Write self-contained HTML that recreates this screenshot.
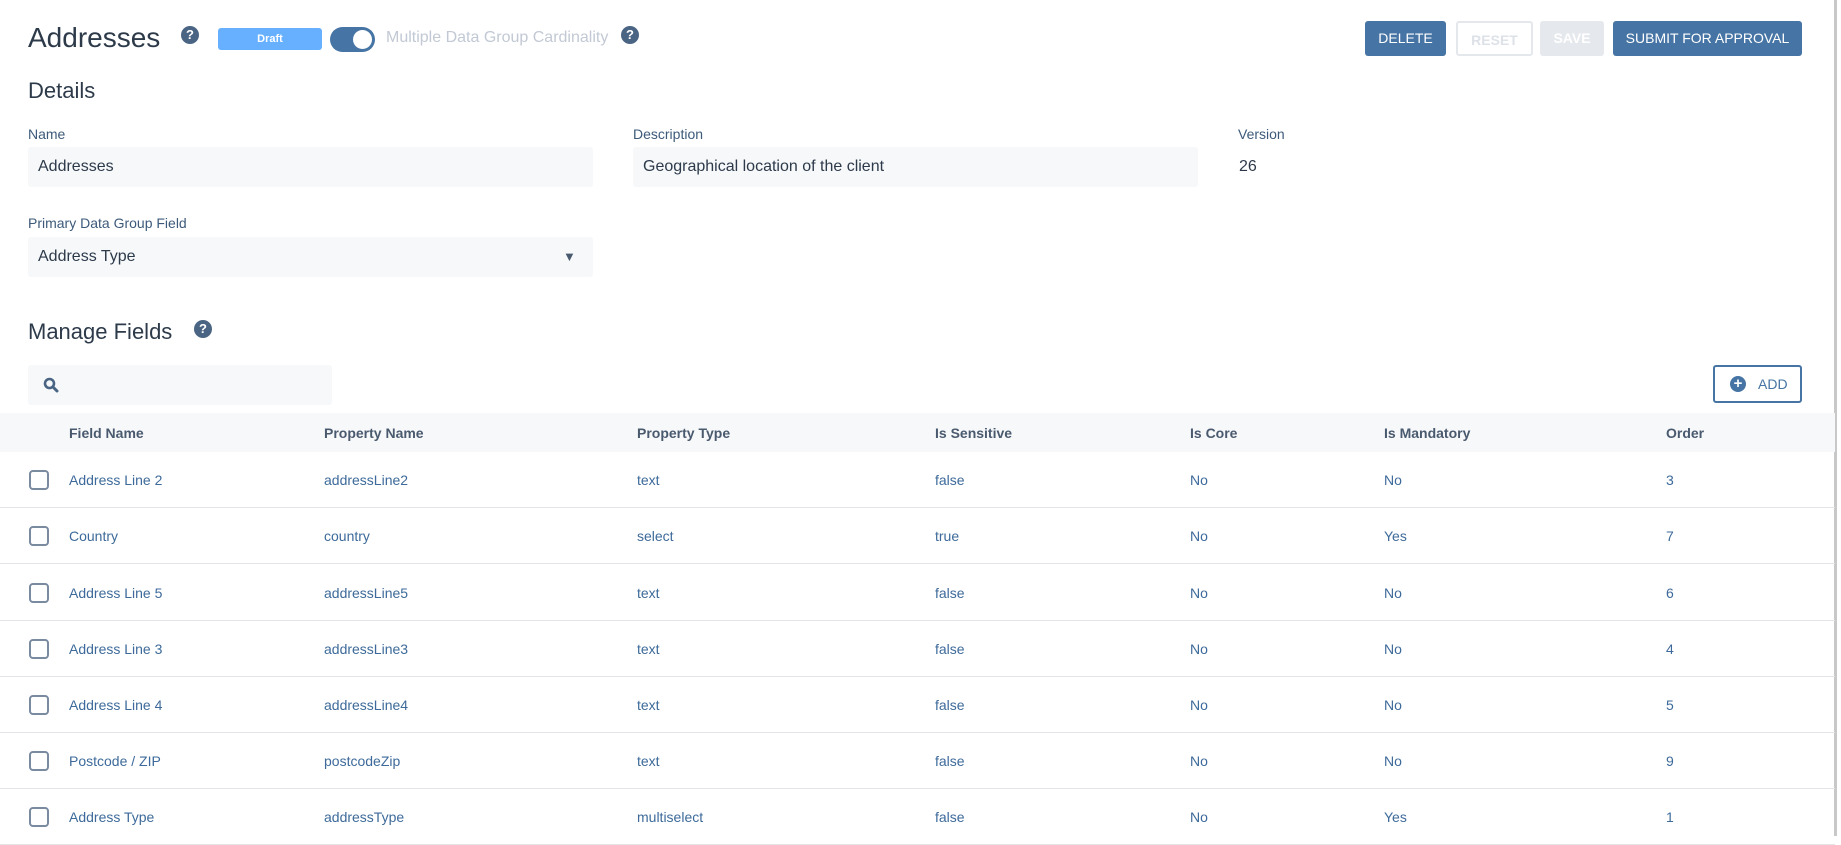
<!DOCTYPE html>
<html><head><meta charset="utf-8"><style>
*{box-sizing:border-box;margin:0;padding:0}
body{width:1841px;height:836px;overflow:hidden;background:#fff;font-family:"Liberation Sans",sans-serif;position:relative;color:#2d3a4a}
.a{position:absolute;white-space:nowrap}
.q{position:absolute;width:18px;height:18px;border-radius:50%;background:#4a6584;color:#fff;font-size:13px;font-weight:bold;text-align:center;line-height:18px}
.btn{position:absolute;top:21px;height:35px;border-radius:3px;font-size:14px;text-align:center;line-height:35px}
.lbl{font-size:14px;color:#3d5a7a}
.inp{position:absolute;background:#f6f8fa;border-radius:3px;font-size:16px;color:#2d3a4a;padding-left:10px;line-height:40px}
.hdr{position:absolute;left:0;top:413px;width:1835px;height:39px;background:#f7f8fa}
.th{position:absolute;top:425px;font-size:14px;font-weight:bold;color:#4a5a6e}
.row{position:absolute;left:0;width:1835px;height:56px;border-bottom:1px solid #e2e4e8}
.row span{position:absolute;top:20px;font-size:14px;color:#3d6a9a}
.cb{position:absolute;left:29px;top:18px;width:20px;height:20px;border:2px solid #7a8ba0;border-radius:4px}
</style></head><body>
<div class="a" style="left:28px;top:22px;font-size:28px;color:#2d3a4a">Addresses</div>
<div class="q" style="left:181px;top:26px">?</div>
<div class="a" style="left:218px;top:28px;width:104px;height:22px;background:#66b0ff;border-radius:3px;color:#fff;font-size:11px;font-weight:bold;text-align:center;line-height:22px">Draft</div>
<div class="a" style="left:330px;top:27px;width:45px;height:25px;background:#4674a4;border-radius:13px"><div style="position:absolute;right:3px;top:3px;width:19px;height:19px;background:#fff;border-radius:50%"></div></div>
<div class="a" style="left:386px;top:29px;font-size:16px;color:#c2c9d4">Multiple Data Group Cardinality</div>
<div class="q" style="left:621px;top:26px">?</div>
<div class="btn" style="left:1365px;width:81px;background:#4674a4;color:#fff">DELETE</div>
<div class="btn" style="left:1456px;width:77px;border:2px solid #e4e8ed;color:#dde2e8;font-weight:bold">RESET</div>
<div class="btn" style="left:1540px;width:64px;background:#e5e8ec;color:#fff;font-weight:bold">SAVE</div>
<div class="btn" style="left:1613px;width:189px;background:#4674a4;color:#fff">SUBMIT FOR APPROVAL</div>
<div class="a" style="left:1834px;top:0;width:3px;height:836px;background:#c8c8c8"></div>
<div class="a" style="left:28px;top:78px;font-size:22px;color:#2d3a4a">Details</div>
<div class="a lbl" style="left:28px;top:126px">Name</div>
<div class="inp" style="left:28px;top:147px;width:565px">Addresses</div>
<div class="a lbl" style="left:633px;top:126px">Description</div>
<div class="inp" style="left:633px;top:147px;width:565px">Geographical location of the client</div>
<div class="a lbl" style="left:1238px;top:126px">Version</div>
<div class="a" style="left:1239px;top:158px;font-size:16px">26</div>
<div class="a lbl" style="left:28px;top:215px">Primary Data Group Field</div>
<div class="inp" style="left:28px;top:237px;width:565px">Address Type<span style="position:absolute;left:535px;top:0;font-size:13px;color:#4a5a6e">▼</span></div>
<div class="a" style="left:28px;top:319px;font-size:22px;color:#2d3a4a">Manage Fields</div>
<div class="q" style="left:194px;top:320px">?</div>
<div class="inp" style="left:28px;top:365px;width:304px;height:40px"><svg style="position:absolute;left:15px;top:12px" width="16" height="16" viewBox="0 0 16 16"><circle cx="6.5" cy="6.5" r="4.5" fill="none" stroke="#4a6584" stroke-width="2.6"/><path d="M10 10l4 4" stroke="#4a6584" stroke-width="3" stroke-linecap="round"/></svg></div>
<div class="a" style="left:1713px;top:365px;width:89px;height:38px;border:2px solid #4674a4;border-radius:3px;font-size:14px;color:#4674a4;line-height:34px;padding-left:43px">ADD<span style="position:absolute;left:15px;top:9px;width:16px;height:16px;border-radius:50%;background:#4674a4;color:#fff;font-weight:bold;font-size:15px;line-height:16px;text-align:center;padding:0">+</span></div>
<div class="hdr"></div>
<div class="th" style="left:69px">Field Name</div>
<div class="th" style="left:324px">Property Name</div>
<div class="th" style="left:637px">Property Type</div>
<div class="th" style="left:935px">Is Sensitive</div>
<div class="th" style="left:1190px">Is Core</div>
<div class="th" style="left:1384px">Is Mandatory</div>
<div class="th" style="left:1666px">Order</div>
<div class="row" style="top:452px"><div class="cb"></div><span style="left:69px">Address Line 2</span><span style="left:324px">addressLine2</span><span style="left:637px">text</span><span style="left:935px">false</span><span style="left:1190px">No</span><span style="left:1384px">No</span><span style="left:1666px">3</span></div>
<div class="row" style="top:508px"><div class="cb"></div><span style="left:69px">Country</span><span style="left:324px">country</span><span style="left:637px">select</span><span style="left:935px">true</span><span style="left:1190px">No</span><span style="left:1384px">Yes</span><span style="left:1666px">7</span></div>
<div class="row" style="top:565px"><div class="cb"></div><span style="left:69px">Address Line 5</span><span style="left:324px">addressLine5</span><span style="left:637px">text</span><span style="left:935px">false</span><span style="left:1190px">No</span><span style="left:1384px">No</span><span style="left:1666px">6</span></div>
<div class="row" style="top:621px"><div class="cb"></div><span style="left:69px">Address Line 3</span><span style="left:324px">addressLine3</span><span style="left:637px">text</span><span style="left:935px">false</span><span style="left:1190px">No</span><span style="left:1384px">No</span><span style="left:1666px">4</span></div>
<div class="row" style="top:677px"><div class="cb"></div><span style="left:69px">Address Line 4</span><span style="left:324px">addressLine4</span><span style="left:637px">text</span><span style="left:935px">false</span><span style="left:1190px">No</span><span style="left:1384px">No</span><span style="left:1666px">5</span></div>
<div class="row" style="top:733px"><div class="cb"></div><span style="left:69px">Postcode / ZIP</span><span style="left:324px">postcodeZip</span><span style="left:637px">text</span><span style="left:935px">false</span><span style="left:1190px">No</span><span style="left:1384px">No</span><span style="left:1666px">9</span></div>
<div class="row" style="top:789px"><div class="cb"></div><span style="left:69px">Address Type</span><span style="left:324px">addressType</span><span style="left:637px">multiselect</span><span style="left:935px">false</span><span style="left:1190px">No</span><span style="left:1384px">Yes</span><span style="left:1666px">1</span></div>
</body></html>
